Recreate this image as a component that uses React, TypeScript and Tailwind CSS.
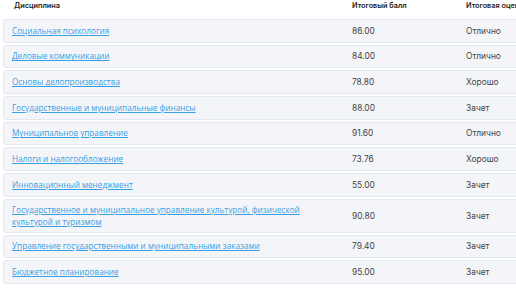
const rows = [
  { name: "Социальная психология", score: "86.00", grade: "Отлично" },
  { name: "Деловые коммуникации", score: "84.00", grade: "Отлично" },
  { name: "Основы делопроизводства", score: "78.80", grade: "Хорошо" },
  { name: "Государственные и муниципальные финансы", score: "88.00", grade: "Зачет" },
  { name: "Муниципальное управление", score: "91.60", grade: "Отлично" },
  { name: "Налоги и налогообложение", score: "73.76", grade: "Хорошо" },
  { name: "Инновационный менеджмент", score: "55.00", grade: "Зачет" },
  {
    name: "Государственное и муниципальное управление культурой, физической культурой и туризмом",
    score: "90.80",
    grade: "Зачет",
  },
  { name: "Управление государственными и муниципальными заказами", score: "79.40", grade: "Зачет" },
  { name: "Бюджетное планирование", score: "95.00", grade: "Зачет" },
];

export default function App() {
  return (
    <div className="w-[516px] h-[289px] overflow-hidden bg-white font-['Inter',sans-serif]">
      <div className="w-[600px] pl-[3px]">
        <div className="grid grid-cols-[340px_114px_1fr] h-[19px] items-start pt-[1px] leading-[10px] text-[7.3px] font-semibold text-[#222]">
          <div className="pl-[11px]">Дисциплина</div>
          <div className="pl-[9px]">Итоговый балл</div>
          <div className="pl-[9px]">Итоговая оценка</div>
        </div>
        <div className="flex flex-col gap-[2px]">
          {rows.map((r) => (
            <div
              key={r.name}
              className="grid grid-cols-[340px_114px_1fr] items-center min-h-[23.67px] py-[4px] leading-[12px] bg-[#f4f5f8] border border-[#e3e7f0] rounded-l-[3px]"
            >
              <div className="pl-[8px] pr-[20px] text-[8.2px] font-['Open_Sans',sans-serif]">
                <a href="#" className="text-[#3a9ee4] underline">
                  {r.name}
                </a>
              </div>
              <div className="pl-[8px] text-[8.4px] text-[#444]">{r.score}</div>
              <div className="pl-[8px] text-[8.4px] text-[#444]">{r.grade}</div>
            </div>
          ))}
        </div>
      </div>
    </div>
  );
}
